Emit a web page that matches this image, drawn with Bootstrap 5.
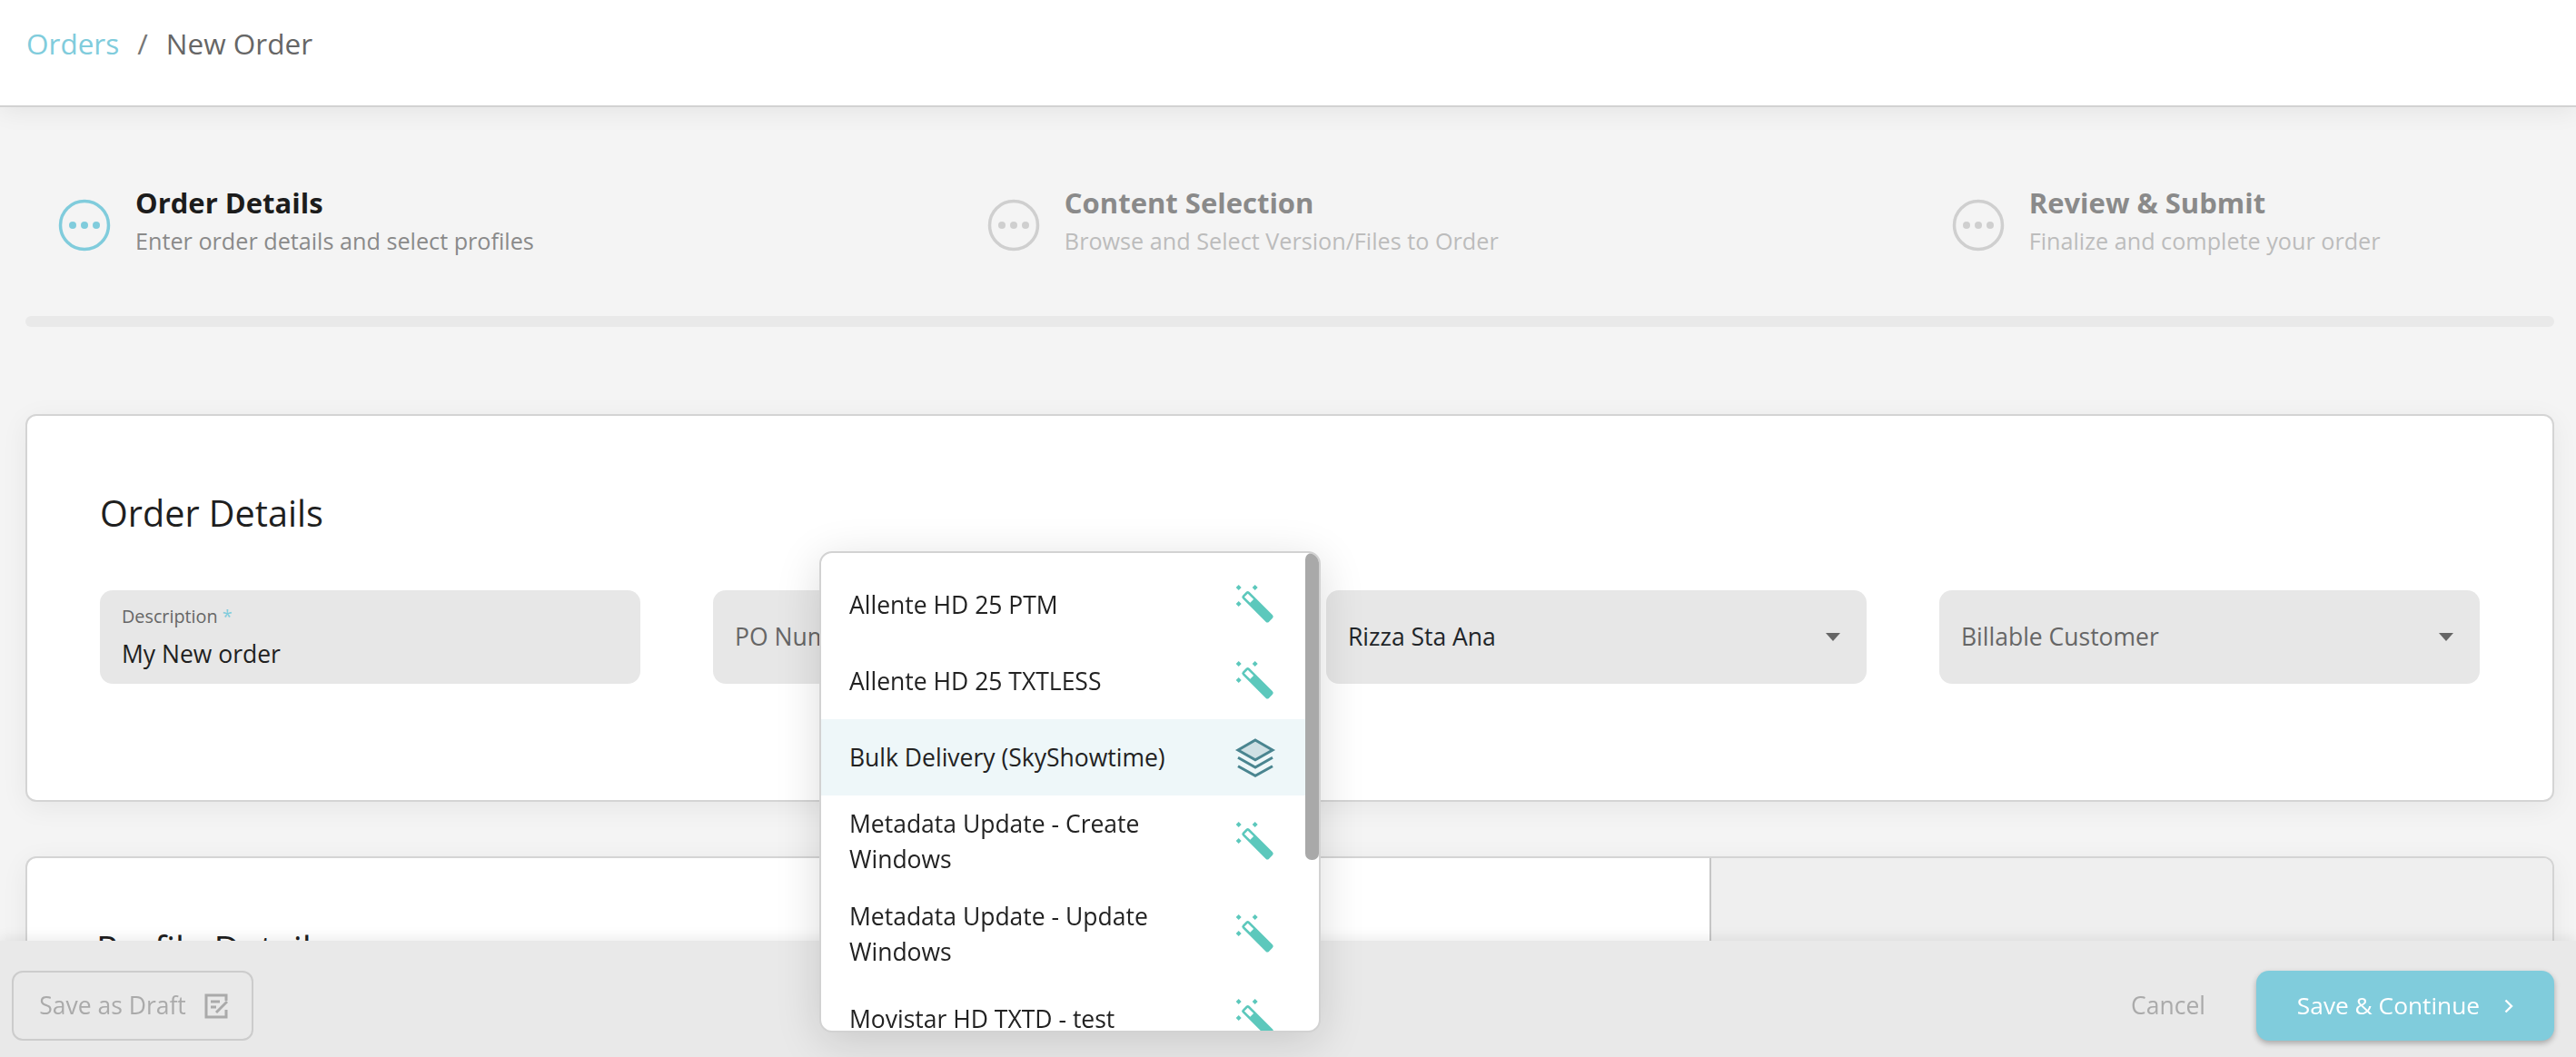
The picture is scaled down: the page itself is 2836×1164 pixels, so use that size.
<!DOCTYPE html>
<html lang="en">
<head>
<meta charset="utf-8">
<title>New Order</title>
<link href="https://cdn.jsdelivr.net/npm/bootstrap@5.3.0/dist/css/bootstrap.min.css" rel="stylesheet">
<style>
html,body{height:100%}
body{font-family:"Open Sans","Noto Sans",sans-serif;background:#f4f4f4;color:#1f1f1f;overflow:hidden;height:1164px}
.top-head{height:118px;background:#fff;border-bottom:2px solid #d2d2d2;box-shadow:0 4px 26px rgba(0,0,0,.07);padding:27px 29px 0;position:relative}
.crumbs{font-size:31.5px;line-height:42px;margin:0;--bs-breadcrumb-divider-color:#777;--bs-breadcrumb-item-padding-x:20px;--bs-breadcrumb-item-active-color:#666}
.crumbs a{color:#80ccdc;text-decoration:none}
.crumbs .breadcrumb-item+.breadcrumb-item::before{color:#777}
.steps-row{padding:84px 0 0 64px;gap:499px;height:230px}
.step-ico{width:58px;height:58px;flex:none;margin-top:17px;margin-right:27px}
.step-title{font-size:31px;line-height:42px;font-weight:700;color:#1c1c1c}
.step-sub{font-size:25.2px;line-height:38px;color:#8a8a8a;white-space:nowrap;margin-top:2px}
.step-off .step-title{color:#8a8a8a}
.step-off .step-sub{color:#bcbcbc}
.prog{height:12px;background:#e9e9e9;border-radius:6px;margin:0 24px 0 28px}
.panel{margin:96px 24px 0 28px;height:427px;background:#fff;border:2px solid #d4d4d4;border-radius:12px;box-shadow:0 6px 30px rgba(0,0,0,.06);padding:81px 80px 0}
.panel-title{font-size:39.6px;line-height:52px;font-weight:400;margin:0 0 59px;color:#1f1f1f}
.fields{gap:80px}
.fld{width:595px;height:103px;background:#e7e7e7;border-radius:14px;padding:0 24px;position:relative;font-size:26.5px;color:#666}
.fld-lab{font-size:19.8px;line-height:28px;color:#666}
.fld-lab span{color:#80ccdc}
.fld-val{color:#1f1f1f;line-height:38px;margin-top:8px}
.caret-dn{width:0;height:0;border-left:8px solid transparent;border-right:8px solid transparent;border-top:9px solid #666;margin-right:5px}
.panel-two{margin:60px 24px 0 28px;height:221px;background:#fff;border:2px solid #d4d4d4;border-bottom:0;border-radius:12px 12px 0 0;box-shadow:0 6px 30px rgba(0,0,0,.06);overflow:hidden}
.pane-left{width:1854px;padding:74px 76px 0;border-right:2px solid #c6c6c6}
.pane-right{background:#efefef}
.foot-bar{position:fixed;left:0;right:0;bottom:0;height:128px;background:#e9e9e9;box-shadow:0 -3px 14px rgba(0,0,0,.08);padding:33px 24px 0 13px;z-index:5}
.btn-draft{height:77px;width:266px;border:2px solid #ccc;border-radius:12px;color:#aaa;font-size:26.5px;background:transparent;gap:20px;padding:0 0 0 2px}
.btn-draft:disabled{color:#aaa;border-color:#ccc;opacity:1}
.link-cancel{font-size:26.5px;color:#aaa;margin-right:56px;padding:0;border:0}
.link-cancel:hover{color:#aaa}
.btn-save{width:328px;height:77px;background:#80ccdc;border:0;border-radius:14px;color:#fff;font-size:26.3px;box-shadow:0 3px 6px rgba(0,0,0,.28);gap:27px;padding:0}
.btn-save:hover{background:#80ccdc;color:#fff}
.pop-menu{position:absolute;left:902px;top:607px;width:552px;height:530px;background:#fff;border:2px solid #d2d2d2;border-radius:14px;box-shadow:0 10px 50px rgba(0,0,0,.14);z-index:10;overflow:hidden;padding-top:15px}
.pop-row{min-height:84px;padding:12px 33px 12px 31px;font-size:26.5px;line-height:39px;color:#222;background:transparent;border:0;border-radius:0;width:534px;gap:20px}
.pop-row.sel{background:#eef7f9}
.pop-text{flex:1 1 auto}
.pop-ico{width:46px;height:46px;flex:none}
.pop-thumb{position:absolute;top:0;right:0;width:15px;height:338px;background:#a9a9a9;border-radius:7px}
</style>
</head>
<body>
<header class="top-head">
  <nav aria-label="breadcrumb">
    <ol class="breadcrumb crumbs">
      <li class="breadcrumb-item"><a href="#">Orders</a></li>
      <li class="breadcrumb-item active" aria-current="page">New Order</li>
    </ol>
  </nav>
</header>

<section>
  <div class="d-flex steps-row">
    <div class="d-flex">
      <svg class="step-ico" viewBox="0 0 58 58"><circle cx="29" cy="29" r="26.5" fill="none" stroke="#80ccdc" stroke-width="3.5"/><circle cx="16" cy="29" r="4" fill="#80ccdc"/><circle cx="29" cy="29" r="4" fill="#80ccdc"/><circle cx="42" cy="29" r="4" fill="#80ccdc"/></svg>
      <div><div class="step-title">Order Details</div><div class="step-sub">Enter order details and select profiles</div></div>
    </div>
    <div class="d-flex step-off">
      <svg class="step-ico" viewBox="0 0 58 58"><circle cx="29" cy="29" r="26.5" fill="none" stroke="#cfcfcf" stroke-width="3.5"/><circle cx="16" cy="29" r="4" fill="#cfcfcf"/><circle cx="29" cy="29" r="4" fill="#cfcfcf"/><circle cx="42" cy="29" r="4" fill="#cfcfcf"/></svg>
      <div><div class="step-title">Content Selection</div><div class="step-sub">Browse and Select Version/Files to Order</div></div>
    </div>
    <div class="d-flex step-off">
      <svg class="step-ico" viewBox="0 0 58 58"><circle cx="29" cy="29" r="26.5" fill="none" stroke="#cfcfcf" stroke-width="3.5"/><circle cx="16" cy="29" r="4" fill="#cfcfcf"/><circle cx="29" cy="29" r="4" fill="#cfcfcf"/><circle cx="42" cy="29" r="4" fill="#cfcfcf"/></svg>
      <div><div class="step-title">Review &amp; Submit</div><div class="step-sub">Finalize and complete your order</div></div>
    </div>
  </div>
  <div class="prog"></div>
</section>

<section class="panel">
  <h2 class="panel-title">Order Details</h2>
  <div class="d-flex fields">
    <div class="fld d-flex flex-column justify-content-center">
      <div class="fld-lab">Description <span>*</span></div>
      <div class="fld-val">My New order</div>
    </div>
    <div class="fld d-flex align-items-center">PO Number</div>
    <div class="fld d-flex align-items-center justify-content-between"><span class="text-dark">Rizza Sta Ana</span><span class="caret-dn"></span></div>
    <div class="fld d-flex align-items-center justify-content-between"><span>Billable Customer</span><span class="caret-dn"></span></div>
  </div>
</section>

<section class="panel-two d-flex">
  <div class="pane-left"><h2 class="panel-title">Profile Details</h2></div>
  <div class="pane-right flex-grow-1"></div>
</section>

<div class="pop-menu">
  <div class="list-group">
    <div class="list-group-item pop-row d-flex align-items-center"><span class="pop-text">Allente HD 25 PTM</span>
      <svg class="pop-ico" viewBox="0 0 46 46"><g fill="#5cc8bc"><path d="M4.7 1 7.7 4 4.7 7 1.7 4Z"/><path d="M22.7 1 25.7 4 22.7 7 19.7 4Z"/><path d="M4.7 19 7.7 22 4.7 25 1.7 22Z"/><g transform="rotate(45 25.5 25.25)"><rect x="5" y="20" width="41" height="10.5" rx="2.5"/><rect x="7.6" y="22.6" width="9" height="5.3" fill="#fff"/></g></g></svg></div>
    <div class="list-group-item pop-row d-flex align-items-center"><span class="pop-text">Allente HD 25 TXTLESS</span>
      <svg class="pop-ico" viewBox="0 0 46 46"><g fill="#5cc8bc"><path d="M4.7 1 7.7 4 4.7 7 1.7 4Z"/><path d="M22.7 1 25.7 4 22.7 7 19.7 4Z"/><path d="M4.7 19 7.7 22 4.7 25 1.7 22Z"/><g transform="rotate(45 25.5 25.25)"><rect x="5" y="20" width="41" height="10.5" rx="2.5"/><rect x="7.6" y="22.6" width="9" height="5.3" fill="#fff"/></g></g></svg></div>
    <div class="list-group-item pop-row sel d-flex align-items-center"><span class="pop-text">Bulk Delivery (SkyShowtime)</span>
      <svg class="pop-ico" viewBox="0 0 46 46"><path d="M23 4 42 15 23 25.7 4 15Z" fill="#cfe0e4" stroke="#4a8590" stroke-width="3"/><path d="M4 23.3 23 34 42 23.3M4 32.7 23 43.3 42 32.7" fill="none" stroke="#4a8590" stroke-width="3"/></svg></div>
    <div class="list-group-item pop-row d-flex align-items-center"><span class="pop-text">Metadata Update - Create Windows</span>
      <svg class="pop-ico" viewBox="0 0 46 46"><g fill="#5cc8bc"><path d="M4.7 1 7.7 4 4.7 7 1.7 4Z"/><path d="M22.7 1 25.7 4 22.7 7 19.7 4Z"/><path d="M4.7 19 7.7 22 4.7 25 1.7 22Z"/><g transform="rotate(45 25.5 25.25)"><rect x="5" y="20" width="41" height="10.5" rx="2.5"/><rect x="7.6" y="22.6" width="9" height="5.3" fill="#fff"/></g></g></svg></div>
    <div class="list-group-item pop-row d-flex align-items-center"><span class="pop-text">Metadata Update - Update Windows</span>
      <svg class="pop-ico" viewBox="0 0 46 46"><g fill="#5cc8bc"><path d="M4.7 1 7.7 4 4.7 7 1.7 4Z"/><path d="M22.7 1 25.7 4 22.7 7 19.7 4Z"/><path d="M4.7 19 7.7 22 4.7 25 1.7 22Z"/><g transform="rotate(45 25.5 25.25)"><rect x="5" y="20" width="41" height="10.5" rx="2.5"/><rect x="7.6" y="22.6" width="9" height="5.3" fill="#fff"/></g></g></svg></div>
    <div class="list-group-item pop-row d-flex align-items-center"><span class="pop-text">Movistar HD TXTD - test</span>
      <svg class="pop-ico" viewBox="0 0 46 46"><g fill="#5cc8bc"><path d="M4.7 1 7.7 4 4.7 7 1.7 4Z"/><path d="M22.7 1 25.7 4 22.7 7 19.7 4Z"/><path d="M4.7 19 7.7 22 4.7 25 1.7 22Z"/><g transform="rotate(45 25.5 25.25)"><rect x="5" y="20" width="41" height="10.5" rx="2.5"/><rect x="7.6" y="22.6" width="9" height="5.3" fill="#fff"/></g></g></svg></div>
  </div>
  <div class="pop-thumb"></div>
</div>

<footer class="foot-bar d-flex align-items-start justify-content-between">
  <button class="btn btn-draft d-flex align-items-center justify-content-center" disabled>Save as Draft
    <svg width="26" height="28" viewBox="0 0 26 28" fill="none" stroke="#aaa" stroke-width="3"><path d="M24 8V2H2V26H24V18"/><path d="M7 9H17M7 15H13"/><path d="M13 21 25 9"/></svg>
  </button>
  <div class="d-flex align-items-center">
    <a class="btn link-cancel" href="#">Cancel</a>
    <button class="btn btn-save d-flex align-items-center justify-content-center">Save &amp; Continue
      <svg width="10" height="16" viewBox="0 0 10 16" fill="none" stroke="#fff" stroke-width="2.4"><path d="M1.5 1.5 8 8 1.5 14.5"/></svg>
    </button>
  </div>
</footer>
<script src="https://cdn.jsdelivr.net/npm/bootstrap@5.3.0/dist/js/bootstrap.bundle.min.js"></script>
</body>
</html>
